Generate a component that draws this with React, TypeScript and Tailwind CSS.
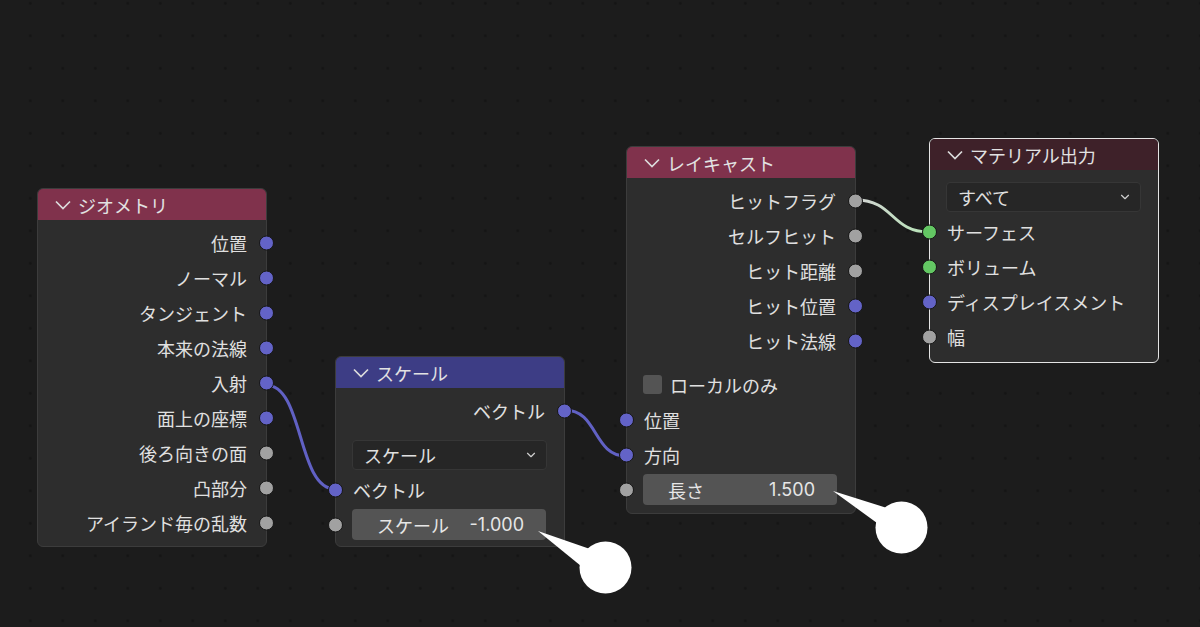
import { ChevronDown } from "lucide-react";
import type { ReactNode } from "react";

type SocketColor = "vector" | "float" | "shader";

const SOCKET: Record<SocketColor, string> = {
  vector: "bg-[#6363c7]",
  float: "bg-[#a1a1a1]",
  shader: "bg-[#63c763]",
};

function Socket({ color, side }: { color: SocketColor; side: "in" | "out" }) {
  return (
    <span
      className={`absolute top-1/2 h-[15px] w-[15px] -translate-y-1/2 rounded-full border border-[#161616] ${
        SOCKET[color]
      } ${side === "out" ? "right-[-8px]" : "left-[-8px]"}`}
    />
  );
}

function Node({
  title,
  header,
  className,
  selected,
  children,
}: {
  title: string;
  header: string;
  className: string;
  selected?: boolean;
  children: ReactNode;
}) {
  return (
    <div
      className={`absolute w-[230px] rounded-[6px] border bg-[#2d2d2d] ${
        selected ? "border-[#e4e4e4]" : "border-[#3c3c3c]"
      } ${className}`}
    >
      <div
        className={`flex h-[31px] items-center gap-[7px] rounded-t-[5px] pl-[17px] text-[18px] leading-none text-[#e2e2e2] ${header}`}
      >
        <svg width="16" height="10" viewBox="0 0 16 10" className="mt-[1px]">
          <polyline points="1,1.5 8,8.5 15,1.5" fill="none" stroke="#dcdcdc" strokeWidth="1.7" />
        </svg>
        <span>{title}</span>
      </div>
      {children}
    </div>
  );
}

function Output({ label, color }: { label: string; color: SocketColor }) {
  return (
    <div className="relative flex h-[35px] items-center justify-end pr-[19px]">
      <span>{label}</span>
      <Socket color={color} side="out" />
    </div>
  );
}

function Input({ label, color }: { label: string; color: SocketColor }) {
  return (
    <div className="relative flex h-[35px] items-center pl-[17px]">
      <span>{label}</span>
      <Socket color={color} side="in" />
    </div>
  );
}

function Select({ value }: { value: string }) {
  return (
    <div className="flex h-[35px] items-center pl-[16px] pr-[17px]">
      <div className="flex h-[30px] flex-1 items-center justify-between rounded-[4px] border border-[#363636] bg-[#262626] pl-[11px] pr-[8px]">
        <span>{value}</span>
        <ChevronDown size={14} strokeWidth={2} className="text-[#cfcfcf]" />
      </div>
    </div>
  );
}

function Field({ label, value }: { label: string; value: string }) {
  return (
    <div className="relative flex h-[35px] items-center pl-[16px] pr-[18px]">
      <div className="flex h-[31px] flex-1 items-center justify-between rounded-[4px] bg-[#545454] pl-[25px] pr-[22px] text-[#e6e6e6]">
        <span>{label}</span>
        <span className="font-['Inter',sans-serif] text-[18px]">{value}</span>
      </div>
      <Socket color="float" side="in" />
    </div>
  );
}

export default function App() {
  return (
    <div className="relative h-[627px] w-[1200px] overflow-hidden bg-[#1c1c1c] bg-[radial-gradient(circle,#151515_1px,transparent_1.8px)] bg-[length:32.5px_32.5px] bg-[position:14px_-13px] font-['Noto_Sans_CJK_JP','Noto_Sans',sans-serif] text-[18px] leading-none text-[#e0e0e0]">
      {/* links */}
      <svg className="absolute inset-0" width="1200" height="627">
        <defs>
          <linearGradient id="flag" x1="0" x2="1" y1="0" y2="0">
            <stop offset="0" stopColor="#d4d4d4" />
            <stop offset="1" stopColor="#b6e4b6" />
          </linearGradient>
        </defs>
        <path d="M266 385 C304 385 297 489 335 489" fill="none" stroke="#6161c4" strokeWidth="3" />
        <path d="M565 410 C598 410 593 456 626 456" fill="none" stroke="#6161c4" strokeWidth="3" />
        <path d="M856 200 C894 200 891 232 929 232" fill="none" stroke="url(#flag)" strokeWidth="3" />
      </svg>

      <Node title="ジオメトリ" header="bg-[#80324c]" className="left-[37px] top-[188px] h-[359px]">
        <div className="pt-[5px]">
          <Output label="位置" color="vector" />
          <Output label="ノーマル" color="vector" />
          <Output label="タンジェント" color="vector" />
          <Output label="本来の法線" color="vector" />
          <Output label="入射" color="vector" />
          <Output label="面上の座標" color="vector" />
          <Output label="後ろ向きの面" color="float" />
          <Output label="凸部分" color="float" />
          <Output label="アイランド毎の乱数" color="float" />
        </div>
      </Node>

      <Node title="スケール" header="bg-[#3d3d85]" className="left-[335px] top-[356px] h-[191px]">
        <div className="pt-[5px]">
          <Output label="ベクトル" color="vector" />
          <div className="mt-[9px]">
            <Select value="スケール" />
          </div>
          <Input label="ベクトル" color="vector" />
          <Field label="スケール" value="-1.000" />
        </div>
      </Node>

      <Node title="レイキャスト" header="bg-[#80324c]" className="left-[626px] top-[146px] h-[368px]">
        <div className="pt-[5px]">
          <Output label="ヒットフラグ" color="float" />
          <Output label="セルフヒット" color="float" />
          <Output label="ヒット距離" color="float" />
          <Output label="ヒット位置" color="vector" />
          <Output label="ヒット法線" color="vector" />
          <div className="mt-[9px] flex h-[35px] items-center gap-[8px] pl-[16px]">
            <span className="h-[19px] w-[19px] rounded-[3px] bg-[#545454]" />
            <span>ローカルのみ</span>
          </div>
          <Input label="位置" color="vector" />
          <Input label="方向" color="vector" />
          <Field label="長さ" value="1.500" />
        </div>
      </Node>

      <Node
        title="マテリアル出力"
        header="bg-[#3e2129]"
        className="left-[929px] top-[138px] h-[225px]"
        selected
      >
        <div className="pt-[9px]">
          <Select value="すべて" />
          <Input label="サーフェス" color="shader" />
          <Input label="ボリューム" color="shader" />
          <Input label="ディスプレイスメント" color="vector" />
          <Input label="幅" color="float" />
        </div>
      </Node>

      {/* callouts */}
      <svg className="absolute inset-0" width="1200" height="627">
        <polygon points="538,531 590,549 581,566" fill="#ffffff" />
        <circle cx="605.5" cy="567.5" r="26" fill="#ffffff" />
        <polygon points="833,491 887,508 877,523" fill="#ffffff" />
        <circle cx="901.5" cy="527.5" r="26" fill="#ffffff" />
      </svg>
    </div>
  );
}
